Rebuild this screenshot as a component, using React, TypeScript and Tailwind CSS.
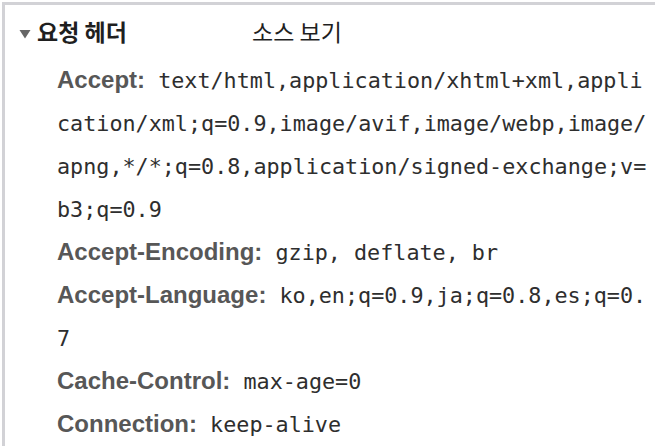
import React from "react";

interface HeaderEntry {
  name: string;
  value: string;
}

const requestHeaders: HeaderEntry[] = [
  {
    name: "Accept",
    value:
      "text/html,application/xhtml+xml,application/xml;q=0.9,image/avif,image/webp,image/apng,*/*;q=0.8,application/signed-exchange;v=b3;q=0.9",
  },
  { name: "Accept-Encoding", value: "gzip, deflate, br" },
  { name: "Accept-Language", value: "ko,en;q=0.9,ja;q=0.8,es;q=0.7" },
  { name: "Cache-Control", value: "max-age=0" },
  { name: "Connection", value: "keep-alive" },
];

const DisclosureTriangle = () => (
  <svg width="12" height="10" viewBox="0 0 12 10" className="shrink-0 mt-[5px]">
    <polygon points="0.5,1 11.5,1 6,9.5" fill="#666666" />
  </svg>
);

const App = () => {
  return (
    <div className="w-[658px] h-[446px] overflow-hidden bg-white pl-[2px] pt-[2px]">
      <div className="h-full border-l-[3px] border-t-[3px] border-[#d2d2d6] w-[653px]">
        {/* 섹션 제목 */}
        <div className="h-[53px] flex items-center pl-[14px] font-['Noto_Sans_CJK_KR',sans-serif] text-[23px] text-[#1f1f1f]">
          <DisclosureTriangle />
          <span className="ml-[6px] w-[215px] font-bold">요청 헤더</span>
          <span>소스 보기</span>
        </div>

        {/* 헤더 목록 */}
        <div className="pl-[52px] pt-[1px] w-[650px]">
          {requestHeaders.map((h) => (
            <div
              key={h.name}
              className="break-all leading-[43px] font-['DejaVu_Sans_Mono',monospace] text-[21.75px] text-[#2e2e2e]"
            >
              <span className="font-['Liberation_Sans',Arial,sans-serif] font-bold text-[24px] leading-none text-[#575757]">
                {h.name}:
              </span>{" "}
              {h.value}
            </div>
          ))}
        </div>
      </div>
    </div>
  );
};

export default App;
